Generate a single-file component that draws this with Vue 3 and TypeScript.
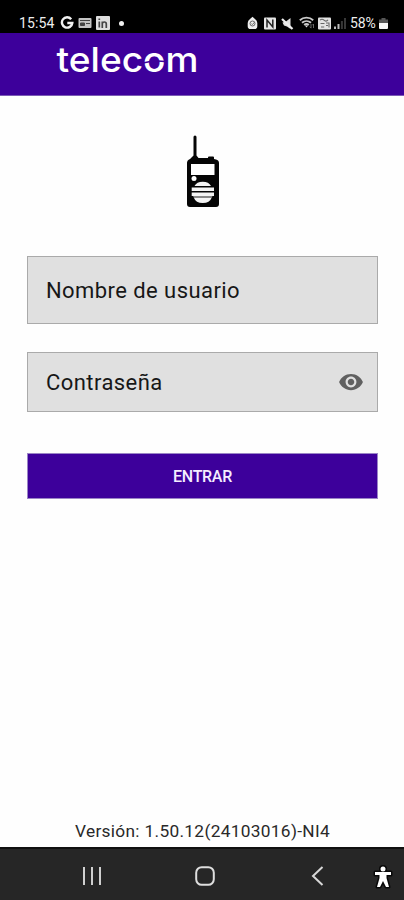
<script setup lang="ts">
import { ref } from 'vue'

const username = ref<string>('')
const password = ref<string>('')
const visible = ref<boolean>(false)
const version = '1.50.12(24103016)-NI4'
</script>

<template>
  <div class="screen">
    <div class="status">
      <span class="clock">15:54</span>
      <svg class="google" width="14" height="14" viewBox="0 0 14 14"><path d="M11.2 3.2A5.2 5.2 0 1 0 12.3 7H7.3" fill="none" stroke="#f2f2f2" stroke-width="2.4" /></svg>
      <svg class="card" width="14" height="12" viewBox="0 0 14 12"><rect x=".5" y="1" width="13" height="10" rx="1" fill="#c4c4c4" /><path d="M2 3.5h10M2.5 6h4v2.500h-4zM8 6.500h4" fill="#444" stroke="#444" /></svg>
      <svg class="linked" width="14" height="14" viewBox="0 0 14 14"><rect width="14" height="14" rx="1" fill="#dedede" /><path d="M3.3 5.5v6M3.3 2.5v1.6M6.3 12V5.5M6.3 8q0-2 2-2t2 2v4" fill="none" stroke="#444" stroke-width="1.7" /></svg>
      <i class="dot"></i>
      <div class="right">
        <svg width="11" height="14" viewBox="0 0 11 14"><path d="M5.5.8 8 3a5 5 0 0 1 2.3 4v3.2Q10.3 13 7.500 13h-4Q.7 13 .7 10.200V7A5 5 0 0 1 3 3Z" fill="#eee" /><circle cx="5.500" cy="7.500" r="2.500" fill="none" stroke="#666" stroke-width="1" /><path d="m4.500 7.700 1 .8 2-2.300" fill="none" stroke="#666" /></svg>
        <svg class="nfc" width="12" height="13" viewBox="0 0 12 13"><rect y=".5" width="12" height="12" rx="1" fill="#e5e5e5" /><path d="M3 10.500V3l5.800 7V2.500" fill="none" stroke="#222" stroke-width="1.500" /></svg>
        <svg class="mute" width="13" height="13" viewBox="0 0 13 13"><path d="M1.500 5.500 5 4.500 9.500 1v11L6 9.500 3 8.500Z" fill="#e2e2e2" /><path d="m1 2 10.500 10" stroke="#eee" stroke-width="2.200" /></svg>
        <svg class="wifi" width="16" height="14" viewBox="0 0 16 14"><path d="M.8 4.200a10 10 0 0 1 13.400 0M3 6.800a6.800 6.800 0 0 1 9 0M5.200 9a3.300 3.300 0 0 1 4.600 0" fill="none" stroke="#c9c9c9" stroke-width="1.900" /><path d="m5.800 9.500 1.700 2 1.700-2Z" fill="#ddd" /><path d="M12 8v4m-1.300-1.300L12 12.200M14.500 12V8m-1.200 1.300L14.500 8" fill="none" stroke="#666" /></svg>
        <svg class="volte" width="13" height="13" viewBox="0 0 13 13"><rect y=".5" width="13" height="12" rx="1" fill="#e2e2e2" /><path d="M2 3.200q2-2 4 0t4-.4M2.500 6.500h4M3 10h3.200M8 6h3v4.500M8 8.500h2" fill="none" stroke="#666" stroke-width="1.100" /></svg>
        <svg class="signal" width="12" height="13" viewBox="0 0 12 13"><path d="M1 12V9.500M4.500 12V7" stroke="#bbb" stroke-width="2" /><path d="M7.900 12V4M11 12V1" stroke="#383838" stroke-width="2" /></svg>
        <span class="percent">58%</span>
        <svg class="battery" width="9" height="13" viewBox="0 0 9 13"><path d="M2.500 1h4v1.500H9V6H0V2.500h2.500Z" fill="#555" /><path d="M0 6h9v5q0 1-1 1H1q-1 0-1-1Z" fill="#f5f5f5" /></svg>
      </div>
    </div>

    <header class="header">
      <svg class="logo" width="150" height="44" viewBox="0 0 150 44">
        <text class="brand" x="6.500" y="35.300" textLength="142" lengthAdjust="spacingAndGlyphs">telecom</text>
        <path class="cut" d="M93 26Q104 23 115 24.500" />
      </svg>
    </header>

    <main class="content">
      <svg class="radio" width="34" height="74" viewBox="0 0 34 74">
        <path d="M7.500 2q0-1.500 1.500-1.500T10.500 2v18.500l2 2.500H22V22.500q0-1 1-1h4q1 0 1 1v1.500l2 .500Q33 25 33 28v41q0 3-3 3H4q-3 0-3-3V28q0-3 3-4l3.500-3.500Z" fill="#050505" />
        <rect x="5" y="29" width="23.500" height="11" fill="#fff" />
        <circle cx="8" cy="43.500" r="2.500" fill="#fff" />
        <path d="M8.500 51a8.800 6.500 0 0 1 16.500 0ZM5.700 52.500h22.300v3.500H5.700ZM5.700 57.500h22.300v3.500H5.700ZM8 63h17.500a9 6.500 0 0 1-17.500 0Z" fill="#f4f4f4" />
        <path d="M7 61h19.500l-.8 2H8Z" fill="#888" />
      </svg>
      <form class="form" @submit.prevent>
        <label class="field user"><input v-model="username" type="text" placeholder="Nombre de usuario" /></label>
        <label class="field pass">
          <input v-model="password" :type="visible ? 'text' : 'password'" placeholder="Contraseña" />
          <svg class="eye" width="26" height="26" viewBox="0 0 24 24" @click="visible = !visible"><path d="M12 4.500C7 4.500 2.730 7.610 1 12c1.730 4.390 6 7.500 11 7.500s9.270-3.110 11-7.500c-1.730-4.390-6-7.500-11-7.500zM12 17c-2.760 0-5-2.240-5-5s2.240-5 5-5 5 2.240 5 5-2.240 5-5 5zm0-8c-1.660 0-3 1.340-3 3s1.340 3 3 3 3-1.340 3-3-1.340-3-3-3z" fill="#606060" /></svg>
        </label>
        <button class="enter" type="submit">ENTRAR</button>
      </form>
      <p class="version">Versión: {{ version }}</p>
    </main>

    <nav class="nav">
      <svg class="recent" width="20" height="20" viewBox="0 0 20 20"><path d="M2 1v18M10 1v18M18 1v18" stroke="#d0d0d0" stroke-width="2" /></svg>
      <svg class="home" width="20" height="20" viewBox="0 0 20 20"><rect x="1.200" y="1.200" width="17.600" height="17.600" rx="5.500" fill="none" stroke="#dedede" stroke-width="2" /></svg>
      <svg class="back" width="13" height="20" viewBox="0 0 13 20"><path d="M11.500 1 2 10l9.500 9" fill="none" stroke="#d8d8d8" stroke-width="2" /></svg>
      <svg class="person" width="22" height="26" viewBox="0 0 22 26"><g stroke="#080808" stroke-width="3" stroke-linejoin="round" fill="#080808"><circle cx="11" cy="5" r="2.500" /><path d="M3 8h16v3h-4.500v3l2.500 9h-3l-3-6-3 6H5l2.500-9v-3H3Z" /></g><g fill="#fff"><circle cx="11" cy="5" r="2.500" /><path d="M3 8h16v3h-4.500v3l2.500 9h-3l-3-6-3 6H5l2.500-9v-3H3Z" /></g></svg>
    </nav>
  </div>
</template>

<style>
body { margin: 0; background: #fff; }
</style>

<style scoped>
.screen { width: 404px; height: 900px; display: flex; flex-direction: column; overflow: hidden; background: #fefefe; font-family: Roboto, "Liberation Sans", sans-serif; }
.status { height: 33px; flex: none; box-sizing: border-box; padding: 13px 17px 0 19px; background: #000; color: #eee; display: flex; align-items: center; font-size: 14px; font-weight: 400; }
.status svg { flex: none; display: block; }
.clock { width: 36px; white-space: nowrap; letter-spacing: .1px; }
.google { margin-left: 5px; }
.card { margin-left: 4px; }
.linked { margin-left: 4px; }
.dot { width: 5px; height: 5px; border-radius: 50%; background: #f0f0f0; margin-left: 9px; }
.right { margin-left: auto; display: flex; align-items: center; }
.nfc { margin-left: 6px; }
.mute { margin-left: 5px; }
.wifi { margin-left: 5px; }
.volte { margin-left: 3px; }
.signal { margin-left: 3px; }
.percent { margin-left: 4px; width: 27px; white-space: nowrap; letter-spacing: -.1px; }
.battery { margin-left: 2px; margin-right: -1px; }
.header { height: 63px; flex: none; box-sizing: border-box; padding: 4px 0 0 50px; background: #3d009b; border-bottom: 1px solid #7b5ab5; }
.logo { display: block; }
.brand { font-family: Inter, sans-serif; font-size: 34.500px; font-weight: 500; fill: #fff; }
.cut { fill: none; stroke: #3d009b; stroke-width: 1.500; }
.content { flex: 1; min-height: 0; display: flex; flex-direction: column; padding: 39px 26px 0 27px; }
.radio { display: block; margin-left: 159px; flex: none; }
.form { margin-top: 47px; display: flex; flex-direction: column; }
.field { box-sizing: border-box; display: flex; align-items: center; border: 1.500px solid #aaa; background: #e0e0e0; padding: 0 13px 0 18px; }
.user { height: 68px; }
.pass { height: 60px; margin-top: 28px; }
.field input { flex: 1; min-width: 0; border: 0; padding: 0; outline: 0; background: transparent; font: 400 22px Roboto, sans-serif; letter-spacing: .43px; color: #171717; }
.field input::placeholder { color: #171717; opacity: 1; }
.eye { flex: none; display: block; }
.enter { height: 46px; margin: 41px 0 0; padding: 0; border: 1px solid #9b85c6; background: #3d009b; color: #f5edff; font: 500 16px Roboto, sans-serif; letter-spacing: -.3px; }
.version { margin: auto 0 5px; padding-right: 0; text-align: center; font-size: 17.300px; letter-spacing: .32px; line-height: 21px; color: #292929; white-space: nowrap; }
.nav { height: 53px; flex: none; box-sizing: border-box; border-top: 2px solid #111; background: #262626; display: flex; align-items: center; padding: 3px 0 0 82px; }
.nav svg { display: block; flex: none; }
.home { margin-left: 93px; }
.back { margin-left: 96px; }
.person { margin-left: 48px; margin-top: 1px; }
</style>
